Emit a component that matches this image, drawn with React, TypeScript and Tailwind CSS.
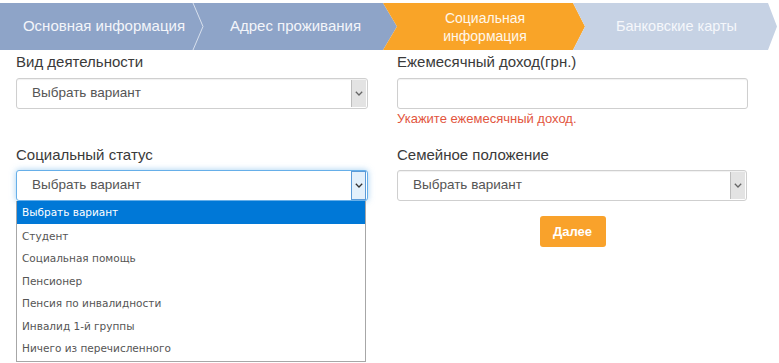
import React from "react";

const options = [
  "Выбрать вариант",
  "Студент",
  "Социальная помощь",
  "Пенсионер",
  "Пенсия по инвалидности",
  "Инвалид 1-й группы",
  "Ничего из перечисленного",
];

function Chevron({ className }: { className?: string }) {
  return (
    <svg width="8" height="5" viewBox="0 0 8 5" className={className}>
      <polyline points="0.8,0.8 4,4 7.2,0.8" fill="none" stroke="currentColor" strokeWidth="1.3" />
    </svg>
  );
}

function SelectBox({ focused = false }: { focused?: boolean }) {
  return (
    <div
      className={
        "flex h-[31px] w-full items-center rounded-[3px] border bg-white " +
        (focused
          ? "border-[#66afe9] shadow-[0_0_6px_rgba(102,175,233,0.6)]"
          : "border-[#cfcfcf] shadow-[inset_0_1px_1px_rgba(0,0,0,0.06)]")
      }
    >
      <span className="flex-1 pl-[15px] text-[13.5px] text-[#555]">Выбрать вариант</span>
      {focused ? (
        <div className="mr-px flex h-[29px] w-[15px] items-center justify-center border border-[#5a9ad8] bg-[#e3f0fb] text-[#333]">
          <Chevron />
        </div>
      ) : (
        <div className="mr-px flex h-[27px] w-[15px] items-center justify-center border-l border-[#bdbdbd] bg-[#e3e3e3] text-[#666]">
          <Chevron />
        </div>
      )}
    </div>
  );
}

export default function App() {
  return (
    <div className="h-[363px] w-[779px] overflow-hidden bg-white font-['Liberation_Sans',Arial,sans-serif]">
      {/* wizard steps */}
      <div className="mt-[3px] flex h-[47px]">
        <div className="relative flex w-[397px] bg-[#8ea4c8] text-[15px] text-[#f3f5fa] [clip-path:polygon(0_0,383px_0,397px_50%,383px_100%,0_100%)]">
          <div className="flex w-[208px] items-center justify-center">Основная информация</div>
          <div className="flex w-[175px] items-center justify-center">Адрес проживания</div>
          <svg width="14" height="47" viewBox="0 0 14 47" className="absolute left-[192px] top-0">
            <polyline points="1,0 11,23.5 1,47" fill="none" stroke="#d8e0ed" strokeWidth="1" />
          </svg>
        </div>
        <div className="ml-[-14px] flex w-[202px] items-center justify-center bg-[#f9a428] pl-[14px] pr-[12px] text-center text-[14px] leading-[18px] text-[#fff7ea] [clip-path:polygon(0_0,190px_0,202px_50%,190px_100%,0_100%,14px_50%)]">
          Социальная
          <br />
          информация
        </div>
        <div className="ml-[-12px] flex w-[204px] items-center justify-center bg-[#c6d2e4] pl-[12px] pr-[9px] text-[14.5px] text-[#f5f7fb] [clip-path:polygon(0_0,195px_0,204px_50%,195px_100%,0_100%,12px_50%)]">
          Банковские карты
        </div>
      </div>

      {/* form */}
      <div className="grid grid-cols-[352px_351px] gap-x-[29px] px-[16px] pt-[2px] text-[#3a3a3a]">
        <div className="h-[93px]">
          <div className="h-[20px] text-[15px] leading-[20px]">Вид деятельности</div>
          <div className="mt-[6px]">
            <SelectBox />
          </div>
        </div>
        <div className="h-[93px]">
          <div className="h-[20px] text-[15px] leading-[20px]">Ежемесячный доход(грн.)</div>
          <div className="mt-[6px] h-[31px] rounded-[3px] border border-[#cfcfcf] shadow-[inset_0_1px_1px_rgba(0,0,0,0.06)]" />
          <div className="mt-px text-[13px] leading-[18px] text-[#e2553e]">Укажите ежемесячный доход.</div>
        </div>

        <div>
          <div className="h-[20px] text-[15px] leading-[20px]">Социальный статус</div>
          <div className="relative mt-[5px]">
            <SelectBox focused />
            <div className="absolute left-0 top-[31px] w-[350px] border border-t-0 border-[#a7a7a7] bg-white pb-[2px] font-['DejaVu_Sans',Verdana,sans-serif] text-[10.5px] text-[#555]">
              {options.map((o, i) => (
                <div
                  key={o}
                  className={
                    "flex items-center pl-[5px] " +
                    (i === 0 ? "h-[23px] bg-[#0078d7] text-white" : "h-[22.5px] pt-[3px]")
                  }
                >
                  {o}
                </div>
              ))}
            </div>
          </div>
        </div>
        <div>
          <div className="h-[20px] text-[15px] leading-[20px]">Семейное положение</div>
          <div className="mt-[5px] w-[350px]">
            <SelectBox />
          </div>
          <div className="mt-[15px] flex justify-center">
            <button className="h-[31px] w-[66px] rounded-[3px] bg-[#f9a22b] text-[13px] font-bold text-white">
              Далее
            </button>
          </div>
        </div>
      </div>
    </div>
  );
}
